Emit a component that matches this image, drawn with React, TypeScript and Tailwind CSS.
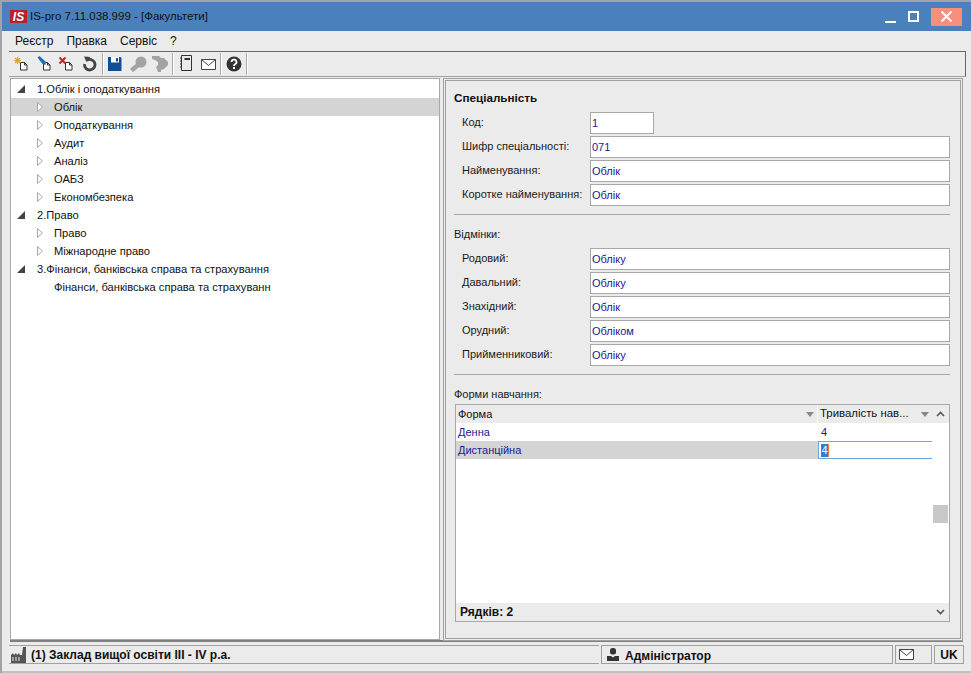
import React from 'react';

const font = "font-['Liberation_Sans',sans-serif]";

const DocBase = () => (
  <path d="M7.500 7.500h4l2.500 2.500v5h-6.500z M11.500 7.500v2.500h2.500" fill="#fff" stroke="#333" strokeWidth="1" />
);

const NewIcon = () => (
  <svg width="18" height="18" viewBox="0 0 18 18">
    <DocBase />
    <path d="M4.500 2v7M1 5.500h7M2 3l5 5M7 3l-5 5" stroke="#e8a020" strokeWidth="1.100" />
  </svg>
);

const EditIcon = () => (
  <svg width="18" height="18" viewBox="0 0 18 18">
    <DocBase />
    <path d="M1.500 2.500l2-1.500 6.500 6-.5 3-3-1z" fill="#1f6fb5" />
  </svg>
);

const DeleteIcon = () => (
  <svg width="18" height="18" viewBox="0 0 18 18">
    <DocBase />
    <path d="M1.500 2.500l6 6M7.500 2.500l-6 6" stroke="#c62828" strokeWidth="2" />
  </svg>
);

const RefreshIcon = () => (
  <svg width="18" height="18" viewBox="0 0 18 18">
    <path d="M5.500 5.500a5.300 5.300 0 1 1-2 3.500" fill="none" stroke="#444" strokeWidth="2.800" />
    <path d="M3 1.500l6.500 .5-4 5z" fill="#444" />
  </svg>
);

const SaveIcon = () => (
  <svg width="18" height="18" viewBox="0 0 18 18">
    <path d="M2 2h12.500l1 1v13H2z" fill="#0f4f96" />
    <path d="M5 2h8v5.500H5z" fill="#fff" />
    <path d="M10 3h2v3.500h-2z" fill="#0f4f96" />
  </svg>
);

const KeyIcon = () => (
  <svg width="18" height="18" viewBox="0 0 18 18">
    <circle cx="12" cy="7" r="5.500" fill="#a3a3a3" />
    <path d="M9 10l-6.500 5.500" stroke="#a3a3a3" strokeWidth="4.500" />
  </svg>
);

const KeyOffIcon = () => (
  <svg width="18" height="18" viewBox="0 0 18 18">
    <path d="M1 1h7l2 2h3l4 4v3l-4 4-3 1v2H7l-2-5 2-2V7L4 5 1 4z" fill="#a3a3a3" />
  </svg>
);

const NoteIcon = () => (
  <svg width="18" height="18" viewBox="0 0 18 18">
    <path d="M4.500 .500h10v15h-10z" fill="none" stroke="#333" />
    <path d="M7.500 4h5.500" stroke="#333" strokeWidth="2" />
    <path d="M3 3h2M3 6h2M3 9h2M3 12h2" stroke="#333" />
  </svg>
);

const MailIcon = ({ w = 15, h = 11 }: { w?: number; h?: number }) => (
  <svg width={w} height={h} viewBox="0 0 15 11">
    <path d="M.5.500h14v10H.5z" fill="#fff" stroke="#444" />
    <path d="M.5.500l7 6 7-6" fill="none" stroke="#444" />
  </svg>
);

const HelpIcon = () => (
  <svg width="18" height="18" viewBox="0 0 18 18">
    <circle cx="9" cy="9" r="7.500" fill="#333" />
    <path d="M6.500 7a2.500 2.500 0 1 1 3.500 2.300c-.7.400-1 .7-1 1.700" fill="none" stroke="#fff" strokeWidth="1.800" />
    <path d="M8 12h2v2H8z" fill="#fff" />
  </svg>
);

const FactoryIcon = () => (
  <svg width="16" height="16" viewBox="0 0 16 16">
    <path d="M0 16V8l2-2 1 2 2-2 1 2 2-2 1 2h2l1-8h3v16z" fill="#555" />
    <path d="M2 10v4M5 10v4M8 10v4" stroke="#ebebeb" />
  </svg>
);

const UserIcon = () => (
  <svg width="12" height="13" viewBox="0 0 12 13">
    <rect x="3" y="0" width="6" height="6.500" rx="2.500" fill="#333" />
    <path d="M0 8h4l2 1.500L8 8h4v5H0z" fill="#333" />
  </svg>
);

const Sep = () => <div className="mx-[0.5px] h-[22px] w-[2px] border-x border-l-[#a8a8a8] border-r-white" />;

const IconSlot = ({ children }: { children: React.ReactNode }) => (
  <div className="flex h-[22px] w-[22.5px] items-center justify-center">{children}</div>
);

const TreeArrow = () => (
  <svg width="6" height="10" viewBox="0 0 6 10" className="shrink-0">
    <path d="M.5.500l5 4.500-5 4.500z" fill="#fff" stroke="#a8a8a8" />
  </svg>
);

const TreeOpen = () => (
  <svg width="8" height="8" viewBox="0 0 8 8" className="shrink-0">
    <path d="M0 8L8 0v8z" fill="#444" />
  </svg>
);

const tree = [
  { label: '1.Облік і оподаткування', level: 0 },
  { label: 'Облік', level: 1, selected: true },
  { label: 'Оподаткування', level: 1 },
  { label: 'Аудит', level: 1 },
  { label: 'Аналіз', level: 1 },
  { label: 'ОАБЗ', level: 1 },
  { label: 'Економбезпека', level: 1 },
  { label: '2.Право', level: 0 },
  { label: 'Право', level: 1 },
  { label: 'Міжнародне право', level: 1 },
  { label: '3.Фінанси, банківська справа та страхування', level: 0 },
  { label: 'Фінанси, банківська справа та страхуванн', level: 2 },
];

const Field = ({ label, value, short }: { label: string; value: string; short?: boolean }) => (
  <div className="flex h-[22px] items-center">
    <div className="w-[136px] shrink-0 whitespace-nowrap pb-[2px] pl-[8px] text-[#1a1a1a]">{label}</div>
    <div className={`flex h-[22px] items-center border border-[#a8a8a8] bg-white pl-[1px] text-[#1a1a90] ${short ? 'w-[64px]' : 'flex-1'}`}>
      {value}
    </div>
  </div>
);

const App = () => {
  return (
    <div className={`flex h-[673px] w-[971px] flex-col overflow-hidden border-t-2 border-l-2 border-t-[#a3a3a3] border-l-[#a3a3a3] bg-[#ebebeb] text-[11px] leading-none ${font}`}>
      {/* Title bar */}
      <div className="flex h-[29px] shrink-0 items-center bg-[#4a81bc] pl-[8px] text-[#111]">
        <div className="flex h-[13px] w-[17px] items-center justify-center bg-[#b8202c] text-[12px] font-bold italic text-white">IS</div>
        <span className="ml-[3px] text-[11.5px]">IS-pro 7.11.038.999 - [Факультети]</span>
        <div className="ml-auto flex items-center">
          <div className="mt-[11px] h-[2px] w-[11px] bg-white" />
          <div className="ml-[12px] h-[11px] w-[11px] border-2 border-white" />
          <div className="ml-[12px] mr-[9px] flex h-[18px] w-[31px] items-center justify-center bg-[#f88f7d]">
            <svg width="11" height="11" viewBox="0 0 11 11">
              <path d="M.5.500l10 10M10.500.500l-10 10" stroke="#fff" strokeWidth="2" />
            </svg>
          </div>
        </div>
      </div>

      {/* Menu */}
      <div className="flex h-[20px] shrink-0 items-center pl-[13px] text-[12px] text-[#111]">
        <span className="mr-[13px]">Реєстр</span>
        <span className="mr-[13px]">Правка</span>
        <span className="mr-[13px]">Сервіс</span>
        <span>?</span>
      </div>

      {/* Toolbar */}
      <div className="mr-[5px] ml-[7px] flex h-[26px] shrink-0 items-center border border-b-[#a0a0a0] border-l-0 border-[#666] pl-[2px]">
        <IconSlot><NewIcon /></IconSlot>
        <IconSlot><EditIcon /></IconSlot>
        <IconSlot><DeleteIcon /></IconSlot>
        <IconSlot><RefreshIcon /></IconSlot>
        <Sep />
        <IconSlot><SaveIcon /></IconSlot>
        <IconSlot><KeyIcon /></IconSlot>
        <IconSlot><KeyOffIcon /></IconSlot>
        <Sep />
        <IconSlot><NoteIcon /></IconSlot>
        <IconSlot><MailIcon /></IconSlot>
        <Sep />
        <IconSlot><HelpIcon /></IconSlot>
        <Sep />
      </div>

      {/* Main */}
      <div className="mt-[1px] ml-[8px] mr-[8px] flex h-[564px] shrink-0 gap-[3px] border-b-2 border-b-[#808080]">
        <div className="w-[430px] shrink-0 border border-[#a8a8a8] bg-white pt-[1px] text-[11.15px] text-[#111]">
          {tree.map((row) => (
            <div key={row.label} className={`flex h-[18px] items-center ${row.selected ? 'bg-[#d4d4d4]' : ''}`}>
              {row.level === 0 && <div className="ml-[6px] mr-[12px] flex"><TreeOpen /></div>}
              {row.level === 1 && <div className="ml-[26px] mr-[11px] flex"><TreeArrow /></div>}
              {row.level === 2 && <div className="ml-[43px]" />}
              <span className="mt-[2px]">{row.label}</span>
            </div>
          ))}
        </div>

        <div className="mb-[-1px] flex-1 border-[3px] border-double border-[#a0a0a0] pl-[8px] pr-[10px] pt-[11px]">
          <div className="mb-[8px] h-[12px] text-[11.7px] font-bold text-[#111]">Спеціальність</div>
          <div className="flex flex-col gap-[2px]">
            <Field label="Код:" value="1" short />
            <Field label="Шифр спеціальності:" value="071" />
            <Field label="Найменування:" value="Облік" />
            <Field label="Коротке найменування:" value="Облік" />
          </div>
          <div className="mt-[8px] h-[1px] bg-[#a8a8a8]" />
          <div className="mt-[14px] mb-[7px] h-[12px] text-[#1a1a1a]">Відмінки:</div>
          <div className="flex flex-col gap-[2px]">
            <Field label="Родовий:" value="Обліку" />
            <Field label="Давальний:" value="Обліку" />
            <Field label="Знахідний:" value="Облік" />
            <Field label="Орудний:" value="Обліком" />
            <Field label="Прийменниковий:" value="Обліку" />
          </div>
          <div className="mt-[8px] h-[1px] bg-[#a8a8a8]" />
          <div className="mt-[14px] mb-[3px] h-[12px] text-[#1a1a1a]">Форми навчання:</div>

          {/* Grid */}
          <div className="ml-[1px] flex h-[218px] border border-[#a8a8a8] bg-white">
            <div className="flex min-w-0 flex-1 flex-col">
              <div className="flex h-[18px] shrink-0 items-center bg-[#ebebeb] text-[#111]">
                <div className="flex h-full w-[362px] items-center justify-between border-r border-white pl-[2px] pr-[3px]">
                  <span>Форма</span>
                  <svg width="8" height="5" viewBox="0 0 8 5"><path d="M0 0h8L4 5z" fill="#888" /></svg>
                </div>
                <div className="flex h-full flex-1 items-center justify-between pl-[2px] pr-[3px]">
                  <span className="text-[11.4px]">Тривалість нав...</span>
                  <svg width="8" height="5" viewBox="0 0 8 5"><path d="M0 0h8L4 5z" fill="#888" /></svg>
                </div>
              </div>
              <div className="flex h-[18px] shrink-0 items-center text-[#1a1a90]">
                <div className="w-[362px] pl-[2px]">Денна</div>
                <div className="flex-1 pl-[3px]">4</div>
              </div>
              <div className="flex h-[18px] shrink-0 items-center text-[#1a1a90]">
                <div className="flex h-full w-[362px] items-center bg-[#d4d4d4] pl-[2px]">Дистанційна</div>
                <div className="flex h-full flex-1 items-center border border-r-0 border-[#6ea5e0] pl-[2px]">
                  <span className="border-r border-r-[#e0803a] bg-[#2f7fd6] py-[1px] pl-[0.5px] pr-[0.5px] text-white">4</span>
                </div>
              </div>
              <div className="flex-1" />
              <div className="flex h-[18px] shrink-0 items-center bg-[#ebebeb] pl-[4px] text-[12px] font-bold text-[#111]">Рядків: 2</div>
            </div>
            <div className="flex w-[17px] shrink-0 flex-col">
              <div className="flex h-[18px] items-center justify-center bg-[#ebebeb]">
                <svg width="9" height="6" viewBox="0 0 9 6"><path d="M1 5l3.500-3.500L8 5" fill="none" stroke="#555" strokeWidth="1.600" /></svg>
              </div>
              <div className="mt-[82px] mr-[1px] ml-[1px] h-[18px] bg-[#c8c8c8]" />
              <div className="mt-auto flex h-[18px] items-center justify-center bg-[#ebebeb]">
                <svg width="9" height="6" viewBox="0 0 9 6"><path d="M1 1l3.500 3.500L8 1" fill="none" stroke="#555" strokeWidth="1.600" /></svg>
              </div>
            </div>
          </div>
        </div>
      </div>

      {/* Status bar */}
      <div className="mt-[3px] mr-[5px] ml-[7px] flex h-[19px] shrink-0 gap-[2px] text-[12px] font-bold text-[#111]">
        <div className="flex w-[590px] items-center gap-[4px] border-y border-y-[#a0a0a0] pl-[2px]">
          <FactoryIcon />
          <span>(1) Заклад вищої освіти III - IV р.а.</span>
        </div>
        <div className="flex w-[292px] items-center gap-[6px] border border-[#a0a0a0] pl-[5px]">
          <UserIcon />
          <span className="mt-[3px]">Адміністратор</span>
        </div>
        <div className="flex w-[37px] items-center border border-[#a0a0a0] pl-[3px]">
          <MailIcon />
        </div>
        <div className="flex w-[30px] items-center justify-center border border-[#a0a0a0]">UK</div>
      </div>
      <div className="mt-auto h-[2px] shrink-0 bg-[#c0c0c0]" />
    </div>
  );
};

export default App;
